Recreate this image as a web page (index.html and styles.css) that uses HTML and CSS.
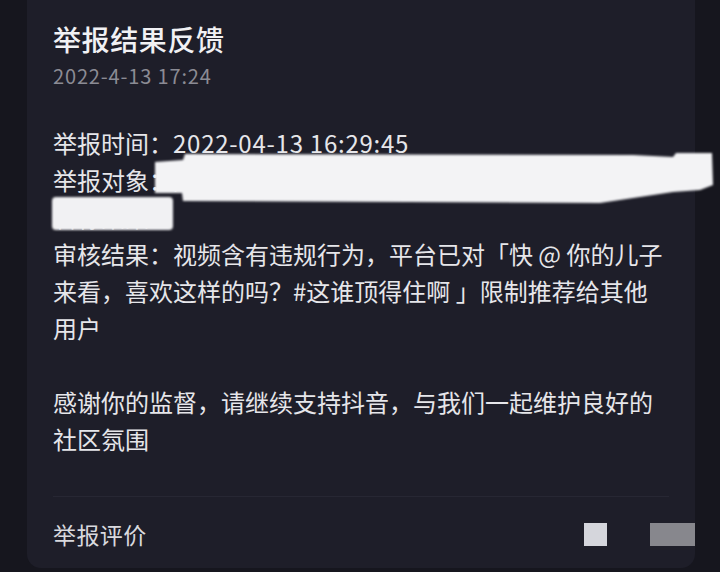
FILE: index.html
```html
<!DOCTYPE html>
<html lang="zh-CN">
<head>
<meta charset="utf-8">
<title>举报结果反馈</title>
<link rel="stylesheet" href="styles.css">
</head>
<body>
<div class="page">
  <div class="card">
    <div class="title">举报结果反馈</div>
    <div class="date">2022-4-13 17:24</div>
    <div class="content">
      <p>举报时间：<span class="num">2022-04-13 16:29:45</span></p>
      <p>举报对象：<span class="hidden">某某某某某某某某某某某某某某某某某</span><br><span class="hidden">名称某某</span></p>
      <p>审核结果：视频含有违规行为，平台已对「快 @ 你的儿子<br>来看，喜欢这样的吗？#这谁顶得住啊 」限制推荐给其他<br>用户</p>
      <p class="gap">感谢你的监督，请继续支持抖音，与我们一起维护良好的<br>社区氛围</p>
    </div>
    <div class="divider"></div>
    <div class="footer">
      <span class="footer-label">举报评价</span>
      <span class="footer-actions">
        <span class="sq sq-light"></span>
        <span class="sq sq-dark"></span>
      </span>
    </div>
  </div>
  <svg class="redact" width="720" height="572" viewBox="0 0 720 572" aria-hidden="true">
    <defs>
      <filter id="soft" x="-10%" y="-50%" width="120%" height="200%">
        <feGaussianBlur stdDeviation="1.3"/>
      </filter>
    </defs>
    <path filter="url(#soft)" fill="#f3f3f5" d="M155 162 L183 160 L185 154 L633 155 L673 157 L676 153 L712 153 L713 185 L700 190 L673 192 L600 203 L183 201 L182 193 L155 193 Z"/>
    <rect filter="url(#soft)" fill="#f1f1f3" x="52" y="197" width="121" height="33" rx="4"/>
  </svg>
</div>
</body>
</html>
```

FILE: styles.css
```css
html, body {
  margin: 0;
  padding: 0;
  background: #16161e;
}

body {
  font-family: "Noto Sans CJK SC", "Noto Sans", sans-serif;
  width: 720px;
  height: 572px;
  overflow: hidden;
}

.page {
  position: relative;
  width: 720px;
  height: 572px;
}

.card {
  margin-left: 27px;
  width: 668px;
  height: 568px;
  box-sizing: border-box;
  padding-top: 19px;
  padding-left: 26px;
  background: #1e1e29;
  border-radius: 0 0 14px 14px;
  display: flex;
  flex-direction: column;
}

.title {
  font-size: 28px;
  line-height: 40px;
  font-weight: 500;
  color: #f1f1f4;
  letter-spacing: 0.6px;
}

.date {
  margin-top: 3px;
  font-size: 20px;
  line-height: 28px;
  color: #8b8b94;
  letter-spacing: 0.85px;
}

.content {
  margin-top: 33.5px;
  font-size: 24px;
  line-height: 37px;
  color: #e6e6ea;
  white-space: nowrap;
}

.content p {
  margin: 0;
}

.content p.gap {
  margin-top: 37px;
}

.num {
  letter-spacing: 0.75px;
}

.hidden {
  color: #d6d6db;
}

.divider {
  margin-top: 39.5px;
  margin-right: 26px;
  height: 1px;
  background: #272733;
}

.footer {
  height: 71px;
  display: flex;
  align-items: center;
  justify-content: space-between;
}

.footer-label {
  font-size: 23px;
  color: #d9d9de;
  padding-top: 3px;
  letter-spacing: 0.4px;
}

.footer-actions {
  display: flex;
  align-items: center;
  gap: 43px;
  padding-top: 3px;
}

.sq {
  display: block;
  height: 23px;
}

.sq-light {
  width: 23px;
  background: #d5d6dc;
}

.sq-dark {
  width: 45px;
  background: #87878d;
}

.redact {
  position: absolute;
  left: 0;
  top: 0;
  pointer-events: none;
}
```
